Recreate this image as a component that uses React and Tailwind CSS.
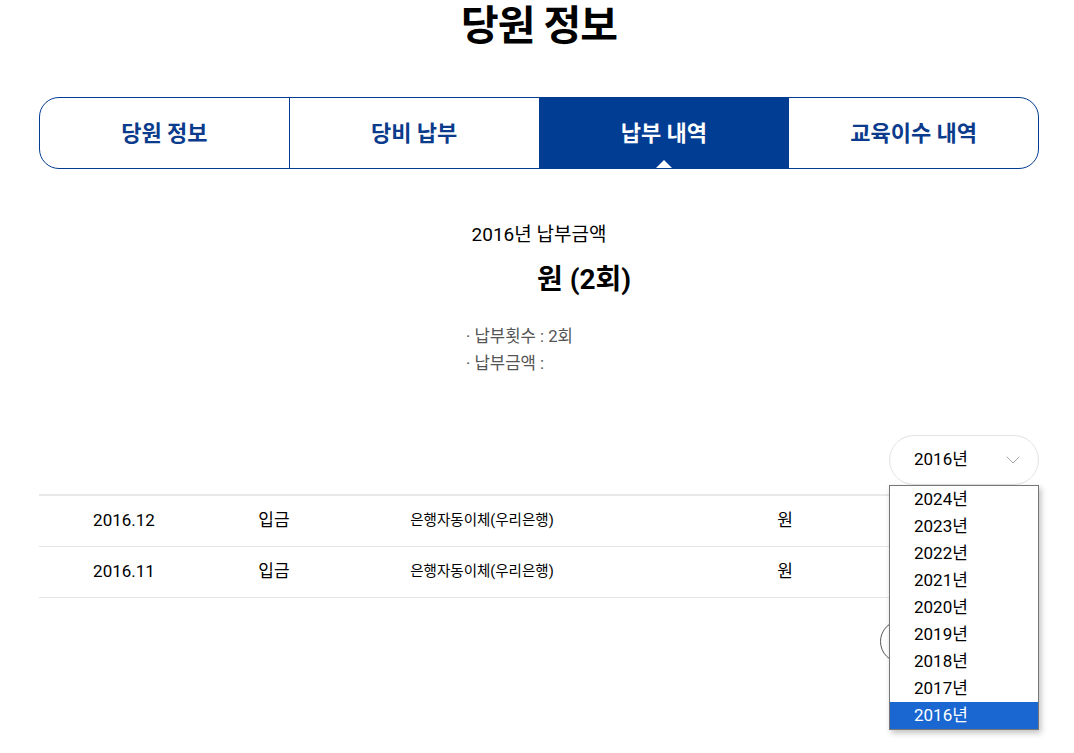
import { ChevronDown } from 'lucide-react'

const TABS = ['당원 정보', '당비 납부', '납부 내역', '교육이수 내역']
const YEARS = ['2024년', '2023년', '2022년', '2021년', '2020년', '2019년', '2018년', '2017년', '2016년']
const ROWS = [
  { month: '2016.12', type: '입금', method: '은행자동이체(우리은행)', amount: '원' },
  { month: '2016.11', type: '입금', method: '은행자동이체(우리은행)', amount: '원' },
]

const font = { fontFamily: 'Roboto, "Noto Sans CJK KR", sans-serif' }

export default function App() {
  const active = 2
  const selected = '2016년'

  return (
    <div className="min-h-[753px] bg-white text-black" style={font}>
      <div className="relative ml-[39px] w-[1000px]">
        <h1 className="text-center text-[41px] font-bold leading-[52px] tracking-tight">당원 정보</h1>

        {/* tabs */}
        <div className="mt-[45px] flex h-[72px] rounded-[20px] border border-[#023b8f] overflow-hidden">
          {TABS.map((t, i) => (
            <div
              key={t}
              className={
                'relative flex flex-1 items-center justify-center text-[22px] font-semibold ' +
                (i > 0 ? 'border-l border-[#023b8f] ' : '') +
                (i === active ? 'bg-[#023d94] text-white' : 'text-[#0b3b8c]')
              }
            >
              {t}
              {i === active && (
                <span className="absolute bottom-0 left-1/2 -translate-x-1/2 h-0 w-0 border-x-[8px] border-b-[8px] border-x-transparent border-b-white" />
              )}
            </div>
          ))}
        </div>

        {/* summary */}
        <div className="mt-[53px]">
          <p className="text-center text-[19px] leading-[26px]">2016년 납부금액</p>
          <p className="mt-[14px] text-center text-[28px] font-bold leading-[36px]">
            <span className="inline-block w-[90px]" />원 (2회)
          </p>
          <ul className="mt-[25px] ml-[427px] text-[16.7px] leading-[27px] text-[#555]">
            <li>· 납부횟수 : 2회</li>
            <li>· 납부금액 :</li>
          </ul>
        </div>

        {/* year select */}
        <div className="mt-[58px] flex justify-end">
          <div className="flex h-[50px] w-[150px] items-center justify-between rounded-full border border-[#e2e2e2] pl-[24px] pr-[13px] text-[17px]">
            <span>{selected}</span>
            <ChevronDown className="h-[24px] w-[24px] text-[#a8a8a8]" strokeWidth={1} />
          </div>
        </div>

        {/* history table */}
        <div className="mt-[9px] border-t-2 border-[#e8e8e8]">
          {ROWS.map((r) => (
            <div key={r.month} className="grid h-[51px] grid-cols-[170px_130px_286px_320px_1fr] items-center border-b border-[#e5e5e5] text-[17px]">
              <span className="text-center">{r.month}</span>
              <span className="text-center">{r.type}</span>
              <span className="text-center text-[14.5px]">{r.method}</span>
              <span className="text-center">{r.amount}</span>
              <span />
            </div>
          ))}
        </div>

        {/* pagination (behind open list) */}
        <div className="mt-[22px] flex justify-end pr-[116px]">
          <div className="h-[43px] w-[43px] rounded-full border border-[#555]" />
        </div>

        {/* open select list */}
        <div className="absolute right-0 top-[485px] w-[150px] border border-[#767676] bg-white shadow-[2px_3px_6px_rgba(0,0,0,0.25)]">
          {YEARS.map((y) => (
            <div
              key={y}
              className={
                'h-[27px] pl-[24px] text-[17px] leading-[27px] ' +
                (y === selected ? 'bg-[#1a67d2] text-white' : 'text-black')
              }
            >
              {y}
            </div>
          ))}
        </div>
      </div>
    </div>
  )
}
